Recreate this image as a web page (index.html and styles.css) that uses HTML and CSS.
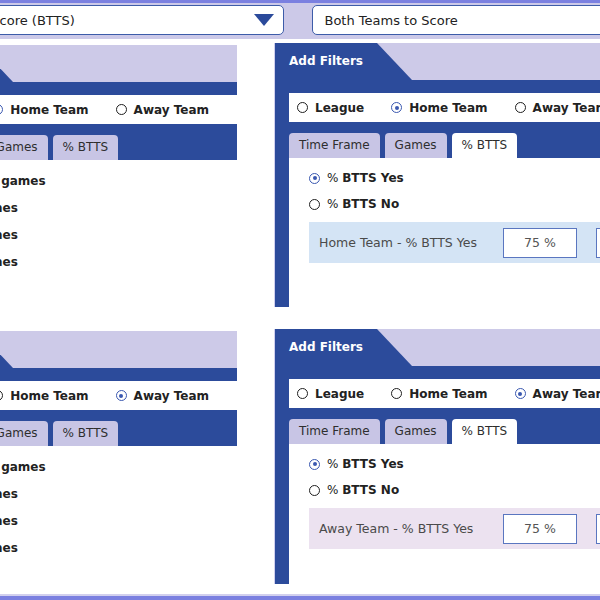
FILE: index.html
```html
<!DOCTYPE html>
<html lang="en">
<head>
<meta charset="utf-8">
<title>BTTS Filters</title>
<link rel="stylesheet" href="styles.css">
</head>
<body>
<div class="page">
  <header class="topbar">
    <div class="selects">
      <div class="select"><span class="select-text">Both Teams to Score (BTTS)</span><span class="caret"></span></div>
      <div class="select"><span class="select-text">Both Teams to Score</span><span class="caret"></span></div>
    </div>
  </header>

  <main class="grid">
    <section class="panel panel-left">
      <div class="panel-head"><div class="panel-tab">Add Filters</div></div>
      <div class="panel-body">
        <div class="radio-row">
          <span class="radio"><span class="dot"></span>League</span>
          <span class="radio"><span class="dot on"></span>Home Team</span>
          <span class="radio"><span class="dot"></span>Away Team</span>
        </div>
        <div class="tabs">
          <span class="tab active">Time Frame</span>
          <span class="tab">Games</span>
          <span class="tab">% BTTS</span>
        </div>
        <div class="content">
          <div class="opt opt-list"><span class="dot on"></span><b>All season games</b></div>
          <div class="opt opt-list"><span class="dot"></span><b>Last 4 games</b></div>
          <div class="opt opt-list"><span class="dot"></span><b>Last 6 games</b></div>
          <div class="opt opt-list"><span class="dot"></span><b>Last 8 games</b></div>
        </div>
      </div>
    </section>

    <section class="panel">
      <div class="panel-head"><div class="panel-tab">Add Filters</div></div>
      <div class="panel-body">
        <div class="radio-row">
          <span class="radio"><span class="dot"></span>League</span>
          <span class="radio"><span class="dot on"></span>Home Team</span>
          <span class="radio"><span class="dot"></span>Away Team</span>
        </div>
        <div class="tabs">
          <span class="tab">Time Frame</span>
          <span class="tab">Games</span>
          <span class="tab active">% BTTS</span>
        </div>
        <div class="content content-tall">
          <div class="opt"><span class="dot on"></span><span>% <b>BTTS Yes</b></span></div>
          <div class="opt"><span class="dot"></span><span>% <b>BTTS No</b></span></div>
          <div class="filter-row filter-home">
            <span class="filter-label">Home Team - % BTTS Yes</span>
            <span class="input">75 %</span>
            <span class="input">100 %</span>
          </div>
        </div>
      </div>
    </section>

    <section class="panel panel-left">
      <div class="panel-head"><div class="panel-tab">Add Filters</div></div>
      <div class="panel-body">
        <div class="radio-row">
          <span class="radio"><span class="dot"></span>League</span>
          <span class="radio"><span class="dot"></span>Home Team</span>
          <span class="radio"><span class="dot on"></span>Away Team</span>
        </div>
        <div class="tabs">
          <span class="tab active">Time Frame</span>
          <span class="tab">Games</span>
          <span class="tab">% BTTS</span>
        </div>
        <div class="content">
          <div class="opt opt-list"><span class="dot on"></span><b>All season games</b></div>
          <div class="opt opt-list"><span class="dot"></span><b>Last 4 games</b></div>
          <div class="opt opt-list"><span class="dot"></span><b>Last 6 games</b></div>
          <div class="opt opt-list"><span class="dot"></span><b>Last 8 games</b></div>
        </div>
      </div>
    </section>

    <section class="panel">
      <div class="panel-head"><div class="panel-tab">Add Filters</div></div>
      <div class="panel-body">
        <div class="radio-row">
          <span class="radio"><span class="dot"></span>League</span>
          <span class="radio"><span class="dot"></span>Home Team</span>
          <span class="radio"><span class="dot on"></span>Away Team</span>
        </div>
        <div class="tabs">
          <span class="tab">Time Frame</span>
          <span class="tab">Games</span>
          <span class="tab active">% BTTS</span>
        </div>
        <div class="content content-short">
          <div class="opt"><span class="dot on"></span><span>% <b>BTTS Yes</b></span></div>
          <div class="opt"><span class="dot"></span><span>% <b>BTTS No</b></span></div>
          <div class="filter-row filter-away">
            <span class="filter-label">Away Team - % BTTS Yes</span>
            <span class="input">75 %</span>
            <span class="input">100 %</span>
          </div>
        </div>
      </div>
    </section>
  </main>

  <footer class="footer"></footer>
</div>
</body>
</html>
```

FILE: styles.css
```css
html, body {
  margin: 0;
  padding: 0;
  overflow: hidden;
  background: #ffffff;
}

body {
  font-family: "DejaVu Sans", "Liberation Sans", sans-serif;
  color: #1f1f1f;
}

.page {
  width: 600px;
  height: 600px;
  display: flex;
  flex-direction: column;
}

/* ---------- top bar ---------- */
.topbar {
  border-top: 3px solid #7b80e0;
  background: #ccc9e8;
  padding: 2px 0 4px;
}

.selects {
  display: grid;
  grid-template-columns: 402px 409px;
  column-gap: 28px;
  margin-left: -118px;
}

.select {
  height: 30px;
  box-sizing: border-box;
  background: #ffffff;
  border: 1.5px solid #3d5ca9;
  border-radius: 5px;
  padding: 0 9px 0 11.5px;
  display: flex;
  align-items: center;
  justify-content: space-between;
  font-size: 13px;
  color: #222222;
  white-space: nowrap;
}

.caret {
  width: 20px;
  height: 12px;
  background: #2b4a9b;
  clip-path: polygon(0 0, 100% 0, 50% 100%);
}

/* ---------- grid of panels ---------- */
.grid {
  display: grid;
  grid-template-columns: 361px 400px;
  grid-template-rows: 264px 255px;
  column-gap: 38px;
  row-gap: 22px;
  align-items: start;
  margin: 4px 0 0 -124px;
}

.panel {
  box-shadow: -1px 0 0 rgba(150, 150, 220, 0.45);
}

.panel-left {
  margin-top: 2px;
}

.panel-head {
  height: 37px;
  background: #cdcae8;
  display: flex;
}

.panel-tab {
  width: 137px;
  box-sizing: border-box;
  padding-left: 14px;
  background: #2c4b9b;
  clip-path: polygon(0 0, 102px 0, 100% 100%, 0 100%);
  color: #ffffff;
  font-weight: bold;
  font-size: 12px;
  line-height: 37px;
  white-space: nowrap;
}

.panel-body {
  background: #2c4b9b;
  padding: 13px 0 0 14px;
}

.radio-row {
  height: 29px;
  background: #ffffff;
  display: flex;
  align-items: center;
  gap: 27px;
  padding-left: 8px;
  white-space: nowrap;
}

.radio {
  display: flex;
  align-items: center;
  gap: 7px;
  font-weight: bold;
  font-size: 12px;
  color: #222222;
}

.dot {
  width: 11px;
  height: 11px;
  box-sizing: border-box;
  border: 1.5px solid #1f1f1f;
  border-radius: 50%;
  flex: none;
  display: flex;
  align-items: center;
  justify-content: center;
}

.dot.on {
  border-color: #3a58b0;
}

.dot.on::after {
  content: "";
  width: 4px;
  height: 4px;
  border-radius: 50%;
  background: #3a58b0;
}

.tabs {
  display: flex;
  gap: 5px;
  margin-top: 11px;
  height: 25px;
}

.tab {
  padding: 0 10px;
  line-height: 25px;
  border-radius: 4px 4px 0 0;
  background: #c8c5e5;
  font-size: 12px;
  color: #2e2e2e;
  white-space: nowrap;
}

.tab.active {
  background: #ffffff;
}

.content {
  background: #ffffff;
  padding: 7px 0 0 20px;
  box-sizing: border-box;
  height: 148px;
}

.content-tall {
  height: 149px;
}

.content-short {
  height: 140px;
}

.opt {
  height: 26px;
  display: flex;
  align-items: center;
  gap: 7px;
  font-size: 12px;
  color: #222222;
  white-space: nowrap;
}

.opt-list {
  height: 27px;
}

.filter-row {
  margin-top: 5px;
  height: 41px;
  display: flex;
  align-items: center;
  padding-left: 10px;
  white-space: nowrap;
}

.filter-home {
  background: #d4e4f5;
}

.filter-away {
  background: #ece2f0;
}

.filter-label {
  width: 184px;
  flex: none;
  font-size: 12.5px;
  color: #4a4a4a;
}

.input {
  width: 74px;
  height: 30px;
  box-sizing: border-box;
  flex: none;
  background: #ffffff;
  border: 1.5px solid #5a76c0;
  margin-right: 19px;
  display: flex;
  align-items: center;
  justify-content: center;
  font-size: 12.5px;
  color: #555555;
}

/* ---------- footer ---------- */
.footer {
  margin-top: 10px;
  border-top: 2px solid #d2d0ee;
  background: #7b80e0;
  flex: 1;
}
```
